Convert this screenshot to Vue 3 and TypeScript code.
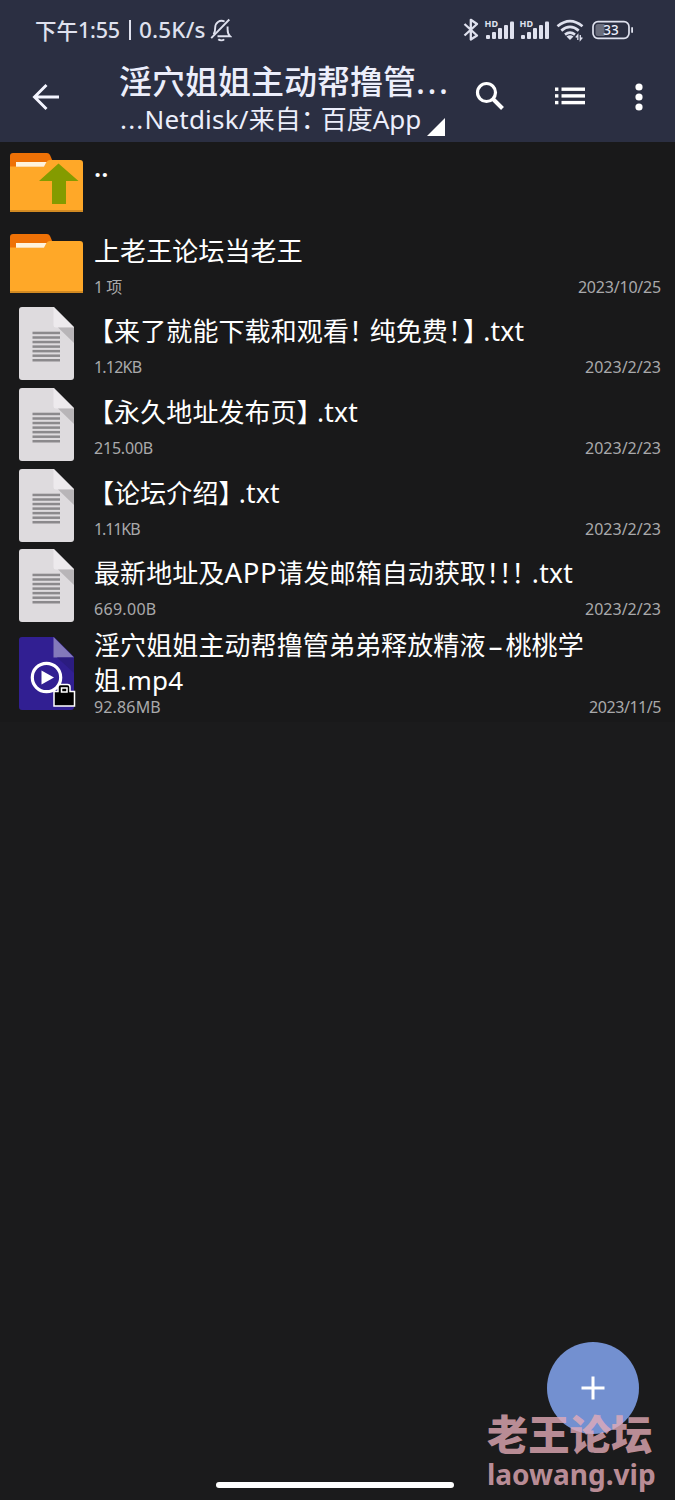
<script setup lang="ts">
type Kind = 'folder-up' | 'folder' | 'text' | 'video'
interface Part {
  text: string
  cls?: string
}
interface Entry {
  kind: Kind
  lines: Part[][]
  size?: string
  sizeCls?: string
  date?: string
  dateCls?: string
}

const entries: Entry[] = [
  { kind: 'folder-up', lines: [[{ text: '..', cls: 'dots' }]] },
  {
    kind: 'folder',
    lines: [[{ text: '上老王论坛当老王' }]],
    size: '1 项',
    sizeCls: 's-count',
    date: '2023/10/25',
    dateCls: 'd-long',
  },
  {
    kind: 'text',
    lines: [[
      { text: '【', cls: 'open' },
      { text: '来了就能下载和观看' },
      { text: '！', cls: 'bang' },
      { text: '纯免费' },
      { text: '！', cls: 'bang-tight' },
      { text: '】', cls: 'close' },
      { text: '.txt', cls: 'ext' },
    ]],
    size: '1.12KB',
    sizeCls: 's-kb',
    date: '2023/2/23',
  },
  {
    kind: 'text',
    lines: [[
      { text: '【', cls: 'open' },
      { text: '永久地址发布页' },
      { text: '】', cls: 'close' },
      { text: '.txt', cls: 'ext' },
    ]],
    size: '215.00B',
    sizeCls: 's-b',
    date: '2023/2/23',
  },
  {
    kind: 'text',
    lines: [[
      { text: '【', cls: 'open' },
      { text: '论坛介绍' },
      { text: '】', cls: 'close' },
      { text: '.txt', cls: 'ext' },
    ]],
    size: '1.11KB',
    sizeCls: 's-kb-narrow',
    date: '2023/2/23',
  },
  {
    kind: 'text',
    lines: [[
      { text: '最新地址及' },
      { text: 'APP', cls: 'app' },
      { text: '请发邮箱自动获取' },
      { text: '！', cls: 'bang-half' },
      { text: '！', cls: 'bang-half' },
      { text: '！', cls: 'bang' },
      { text: '.txt', cls: 'ext' },
    ]],
    size: '669.00B',
    sizeCls: 's-wide',
    date: '2023/2/23',
  },
  {
    kind: 'video',
    lines: [
      [
        { text: '淫穴姐姐主动帮撸管弟弟释放精液' },
        { text: '–', cls: 'dash' },
        { text: '桃桃学' },
      ],
      [{ text: '姐' }, { text: '.mp4', cls: 'mp4' }],
    ],
    size: '92.86MB',
    sizeCls: 's-mb',
    date: '2023/11/5',
    dateCls: 'd-short',
  },
]

const ruleLines = [0, 1, 2, 3, 4, 5, 6]
</script>

<template>
  <div class="screen">
    <header class="header">
      <div class="status">
        <div class="clock">
          <span>下午</span><span class="time">1:55</span><span class="bar"></span><span class="speed">0.5K/s</span>
          <svg class="bell" viewBox="0 0 22 24" width="22" height="24" fill="none" stroke="#dfe1ee" stroke-width="1.9">
            <path d="M7.500 18.200 H20 C18.200 16.500 17.600 15 17.600 11.500 V8.500 M14.600 3.500 C9.500 1.300 5.200 5 5.200 9.500 C5.200 13 5 14.500 3.600 16.300" />
            <path d="M1.200 20.200 L19.300 1.500" />
            <path d="M8.300 21.300 C9.800 22.700 12.800 22.700 14.200 21.300" />
          </svg>
        </div>
        <svg class="indicators" viewBox="460 16 180 28" width="180" height="28">
          <path d="M464.500 24 L477 35.500 L470.800 39.500 V19.800 L477 24 L464.500 35.500" fill="none" stroke="#dfe1ee" stroke-width="2.300" stroke-linejoin="round" />
          <g v-for="dx in [0, 35]" :key="dx" :transform="`translate(${dx} 0)`" fill="#dfe1ee">
            <text x="484.600" y="27" class="hd">HD</text>
            <rect x="486" y="35" width="4" height="4" rx="1" />
            <rect x="492" y="32" width="4" height="7" rx="1" />
            <rect x="498" y="28" width="4" height="11" rx="1" />
            <rect x="504" y="25" width="4" height="14" rx="1" />
            <rect x="510" y="21.500" width="4" height="17.500" rx="1" />
          </g>
          <g fill="none" stroke="#dfe1ee" stroke-width="2.700">
            <path d="M557.500 26.300 Q570 16 582.500 26.300" />
            <path d="M561.300 30.600 Q570 23.300 578.700 30.600" />
            <path d="M565 34.600 Q570 30.600 575 34.600" />
          </g>
          <path d="M566.500 36.400 Q570 34 573.500 36.400 L570 40 Z" fill="#dfe1ee" />
          <path d="M577.800 40 V35 L575.800 37.500 M580.300 35 V40 L582.300 37.500" fill="none" stroke="#dfe1ee" stroke-width="1.300" />
          <rect x="593" y="21.700" width="36" height="16.600" rx="5" fill="none" stroke="#dfe1ee" stroke-width="1.700" />
          <path d="M604.500 24 V36 H598 Q595.500 36 595.500 33.500 V26.500 Q595.500 24 598 24 Z" fill="#6a6d7c" />
          <rect x="631.200" y="27" width="1.800" height="6" rx="0.900" fill="#dfe1ee" />
          <text x="603.300" y="34.800" class="battery">33</text>
        </svg>
      </div>
      <div class="toolbar">
        <svg class="back" viewBox="0 0 28 28" width="28" height="28" fill="none" stroke="#f4f5ff" stroke-width="2.900">
          <path d="M27 14 H3 M14.500 2 L2.500 14 L14.500 26" />
        </svg>
        <div class="titles">
          <div class="title">淫穴姐姐主动帮撸管<span class="more">...</span></div>
          <div class="path">
            <span class="lead">...</span><span class="disk">Netdisk/</span><span>来自</span><span class="colon">：</span><span>百度</span><span class="path-app">App</span>
            <svg class="corner" viewBox="0 0 18 18" width="18" height="18"><path d="M0 18 L18 0 V18 Z" fill="#fff" /></svg>
          </div>
        </div>
        <svg class="search" viewBox="0 0 30 30" width="30" height="30" fill="none" stroke="#fff">
          <circle cx="11.500" cy="11.500" r="9" stroke-width="3.200" />
          <path d="M18 18 L27.500 27.500" stroke-width="4" />
        </svg>
        <svg class="view" viewBox="0 0 30 18" width="30" height="18" fill="#fff">
          <template v-for="y in [0.5, 7.2, 13.9]" :key="y">
            <rect x="0" :y="y" width="3.400" height="3.400" />
            <rect x="6.500" :y="y" width="23.500" height="3.400" />
          </template>
        </svg>
        <svg class="menu" viewBox="0 0 8 28" width="8" height="28" fill="#fff">
          <circle cx="4" cy="4" r="3.600" /><circle cx="4" cy="14" r="3.600" /><circle cx="4" cy="24" r="3.600" />
        </svg>
      </div>
    </header>

    <main class="list">
      <div v-for="(entry, i) in entries" :key="i" class="row" :class="'row-' + entry.kind">
        <div class="icon">
          <svg v-if="entry.kind === 'folder' || entry.kind === 'folder-up'" viewBox="0 0 73 60" width="73" height="60">
            <path d="M0 16 V3 Q0 0 3 0 H37 Q39 0 40 2 L43 9 L38 16 Z" fill="#ee7106" />
            <path d="M0 13.500 H34 L36.500 9 Q37.500 7 40 7 H70 Q73 7 73 10 V59 H0 Z" fill="#ffa828" />
            <path d="M6 9 H36.500 L34 13.700 H6 Z" fill="#fff3dc" />
            <rect y="57" width="73" height="2" fill="#d28a22" />
            <path v-if="entry.kind === 'folder-up'" d="M48.500 10.500 L68.500 28 H56 V51 H42 V28 H29 Z" fill="#849b00" />
          </svg>
          <svg v-else-if="entry.kind === 'text'" viewBox="0 0 55 73" width="55" height="73">
            <path d="M3 0 H35 L55 20 V70 Q55 73 52 73 H3 Q0 73 0 70 V3 Q0 0 3 0 Z" fill="#dedbde" />
            <path d="M34.500 0 L55 20.500 H37 Q34.500 20.500 34.500 18 Z" fill="#edeaed" />
            <path d="M39 20.500 H55 V36 Z" fill="#b8b5b8" />
            <rect v-for="n in ruleLines" :key="n" x="13.500" :y="24.700 + n * 4.550" width="27.500" height="2.500" fill="#8b898c" />
          </svg>
          <svg v-else viewBox="0 0 57 73" width="57" height="73">
            <path d="M3 0 H35 L55 20 V70 Q55 73 52 73 H3 Q0 73 0 70 V3 Q0 0 3 0 Z" fill="#311f92" />
            <path d="M34.500 0 L55 20.500 H34.500 Z" fill="#8379bb" />
            <path d="M38 20.500 H55 V36 Z" fill="#2b1c80" />
            <circle cx="27.500" cy="40.500" r="14.200" fill="none" stroke="#fff" stroke-width="3.200" />
            <path d="M22.500 33.500 L35 40.500 L22.500 47.500 Z" fill="#fff" />
            <path d="M35 69 V54.500 H39 V50 Q39 47.500 41.500 47.500 H48.500 Q51 47.500 51 50 V54.500 H55.500 V69 Z" fill="#000" stroke="#fff" stroke-width="1.500" />
            <rect x="42.500" y="51" width="5.500" height="4" fill="#000" stroke="#fff" stroke-width="1.500" />
          </svg>
        </div>
        <div class="body">
          <div class="name">
            <div v-for="(line, l) in entry.lines" :key="l" class="line"><span v-for="(part, p) in line" :key="p" :class="part.cls">{{ part.text }}</span></div>
          </div>
          <div v-if="entry.size" class="meta">
            <span :class="entry.sizeCls">{{ entry.size }}</span>
            <span class="date" :class="entry.dateCls">{{ entry.date }}</span>
          </div>
        </div>
      </div>
    </main>

    <button class="fab" aria-label="+">
      <svg viewBox="0 0 24 24" width="24" height="24" stroke="#fff" stroke-width="3"><path d="M12 0.500 V23.500 M0.500 12 H23.500" /></svg>
    </button>
    <div class="watermark">
      <div class="wm-name">老王论坛</div>
      <div class="wm-site">laowang.vip</div>
    </div>
    <div class="home"></div>
  </div>
</template>

<style>
body {
  background: #1b1b1c;
}
</style>

<style scoped>
.screen {
  position: relative;
  width: 675px;
  height: 1500px;
  overflow: hidden;
  background: #1b1b1c;
  color: #fff;
  font-family: "Noto Sans", "Noto Sans CJK SC", sans-serif;
  white-space: nowrap;
}
svg {
  display: block;
  flex: none;
}
.header {
  height: 142px;
  background: #2b2f42;
  color: #eceefb;
}
.status {
  display: flex;
  justify-content: space-between;
  height: 60px;
  padding: 0 35px;
}
.clock {
  display: flex;
  align-items: center;
  height: 59px;
  font-size: 21.500px;
  font-weight: 500;
  color: #dfe1ee;
}
.time {
  letter-spacing: -0.200px;
}
.bar {
  width: 2px;
  height: 20px;
  margin: 0 8px 0 9px;
  background: #dfe1ee;
}
.speed {
  font-size: 22.500px;
  letter-spacing: 0.150px;
}
.bell {
  margin: 0 0 0 4px;
}
.indicators {
  margin-top: 16px;
}
.hd {
  font: 700 9px "Noto Sans", sans-serif;
}
.battery {
  font: 500 13.500px "Noto Sans", sans-serif;
  fill: #eceefb;
}
.toolbar {
  display: flex;
  height: 82px;
}
.back {
  margin: 23px 0 0 32px;
}
.titles {
  width: 328px;
  margin-left: 59px;
}
.title {
  height: 41px;
  font-size: 33px;
  line-height: 43px;
  font-weight: 500;
}
.more {
  letter-spacing: 2.500px;
}
.path {
  display: flex;
  height: 36px;
  font-size: 26px;
  line-height: 36px;
}
.lead {
  padding-left: 1px;
  letter-spacing: 1.200px;
}
.disk {
  letter-spacing: 0.200px;
}
.colon {
  width: 20px;
  font-feature-settings: "halt";
}
.corner {
  margin: 17px 0 0 6px;
}
.search {
  margin: 21px 0 0 28px;
}
.view {
  margin: 27px 0 0 50px;
}
.menu {
  margin: 23px 0 0 50px;
}
.list {
  background: #19191a;
}
.row {
  display: flex;
  height: 80.700px;
}
.row-video {
  height: 95.500px;
}
.icon {
  display: flex;
  justify-content: flex-end;
  width: 83px;
  padding-top: 11px;
}
.row-text .icon {
  width: 74px;
  padding: 4px 9px 0 0;
}
.row-video .icon {
  width: 76px;
  padding: 11px 7px 0 0;
}
.body {
  flex: 1;
  padding: 11px 14px 0 11px;
}
.name {
  height: 43px;
  font-size: 26px;
  line-height: 34px;
  letter-spacing: 0.100px;
}
.line {
  display: flex;
  height: 34.500px;
}
.dots {
  margin-top: -3px;
  font-weight: 600;
}
.row-video .body {
  padding-top: 2px;
}
.row-video .name {
  height: 69px;
}
.meta {
  display: flex;
  justify-content: space-between;
  height: 20px;
  font-size: 16px;
  line-height: 20px;
  color: #a9a9ab;
}
.open,
.bang,
.bang-tight,
.bang-half,
.close {
  font-feature-settings: "halt";
}
.open {
  margin-left: 7px;
}
.bang {
  margin-right: 7.500px;
}
.bang-half {
  letter-spacing: -0.500px;
}
.bang-tight {
  margin-right: 2px;
}
.close {
  margin-right: 7px;
}
.ext {
  font-size: 26.500px;
  letter-spacing: 0.250px;
}
.app {
  font-size: 27.500px;
  letter-spacing: 0.650px;
}
.dash {
  width: 20px;
  font-size: 28px;
  text-align: center;
}
.mp4 {
  letter-spacing: 0.300px;
}
.s-count {
  letter-spacing: -0.500px;
}
.s-kb {
  letter-spacing: -0.800px;
}
.s-kb-narrow {
  letter-spacing: -1.100px;
}
.s-b {
  letter-spacing: -0.200px;
}
.s-wide {
  letter-spacing: 0.300px;
}
.s-mb {
  letter-spacing: 0.150px;
}
.d-long {
  letter-spacing: -0.200px;
}
.d-short {
  letter-spacing: -0.450px;
}
.fab {
  position: absolute;
  left: 547px;
  top: 1342px;
  display: flex;
  align-items: center;
  justify-content: center;
  width: 92px;
  height: 92px;
  padding: 0;
  border: 0;
  border-radius: 50%;
  background: #7390d0;
}
.watermark {
  position: absolute;
  left: 487px;
  top: 1410px;
  font-weight: 700;
  color: rgba(228, 172, 184, 0.800);
}
.wm-name {
  height: 47px;
  font-size: 41.300px;
  line-height: 48px;
  font-weight: 900;
}
.wm-site {
  font-size: 28px;
  line-height: 34px;
}
.home {
  position: absolute;
  left: 216px;
  top: 1482px;
  width: 238px;
  height: 6px;
  border-radius: 3px;
  background: #fff;
}
</style>
